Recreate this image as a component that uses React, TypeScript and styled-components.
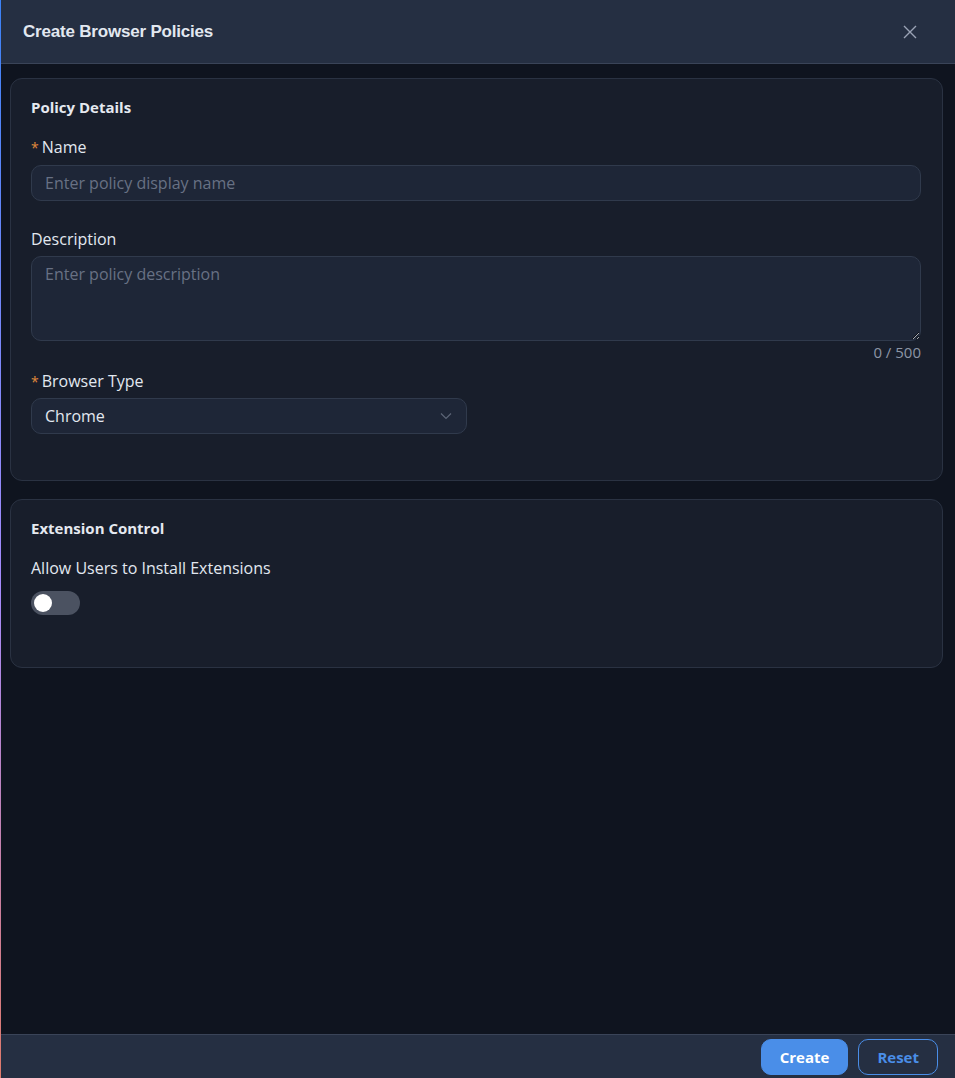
import React, { useState } from "react";
import styled, { createGlobalStyle } from "styled-components";

const FONT = `"Open Sans", "Inter", sans-serif`;

const GlobalStyle = createGlobalStyle`
	html, body {
		margin: 0;
		padding: 0;
		background: #0f141f;
	}
	* {
		box-sizing: border-box;
	}
	body {
		font-family: ${FONT};
		color: #e2e8f0;
	}
`;

const Drawer = styled.div`
	display: flex;
	flex-direction: column;
	width: 955px;
	height: 1078px;
	background: #0f141f;
	border-left: 1px solid;
	border-image: linear-gradient(to bottom, #3b82f6, #a78bfa 55%, #e07a6a) 1;
`;

const Header = styled.div`
	display: flex;
	align-items: center;
	justify-content: space-between;
	height: 64px;
	padding: 0 38px 0 22px;
	background: #252f42;
	border-bottom: 1px solid #3a4458;
	flex-shrink: 0;
`;

const Title = styled.h1`
	margin: 0;
	font-family: "Liberation Sans", Arial, sans-serif;
	font-size: 17px;
	font-weight: 700;
	color: #e2e8f0;
	letter-spacing: -0.2px;
`;

const CloseButton = styled.button`
	display: flex;
	padding: 0;
	border: none;
	background: none;
	cursor: pointer;
`;

const Body = styled.div`
	flex: 1;
	display: flex;
	flex-direction: column;
	gap: 18px;
	padding: 14px 12px 0 9px;
	overflow: auto;
`;

const Card = styled.section<{ minHeight: number }>`
	min-height: ${({ minHeight }) => minHeight}px;
	padding: 18px 21px 24px 20px;
	background: #181e2b;
	border: 1px solid #2a3242;
	border-radius: 12px;
`;

const CardTitle = styled.h2`
	margin: 0 0 19px;
	font-size: 15px;
	font-weight: 700;
	color: #e5e9f0;
`;

const Field = styled.div<{ gapBelow?: number }>`
	display: flex;
	flex-direction: column;
	margin-bottom: ${({ gapBelow }) => gapBelow ?? 0}px;
`;

const Label = styled.label<{ spaceBelow?: number }>`
	display: flex;
	align-items: baseline;
	gap: 3px;
	margin-bottom: ${({ spaceBelow }) => spaceBelow ?? 6}px;
	font-size: 16px;
	line-height: 22px;
	color: #e2e8f0;
`;

const Required = styled.span`
	color: #e08a3c;
	font-size: 14px;
`;

const inputBase = `
	width: 100%;
	padding: 0 13px;
	background: #1e2637;
	border: 1px solid #303a4c;
	border-radius: 10px;
	color: #e2e8f0;
	font-family: ${FONT};
	font-size: 16px;
	outline: none;
	&::placeholder {
		color: #687184;
	}
`;

const TextInput = styled.input`
	${inputBase}
	height: 36px;
`;

const TextArea = styled.textarea`
	${inputBase}
	display: block;
	height: 85px;
	padding-top: 6px;
	resize: vertical;
`;

const Counter = styled.div`
	margin-top: 1px;
	text-align: right;
	font-size: 15px;
	color: #8d95a5;
`;

const SelectBox = styled.div`
	${inputBase}
	display: flex;
	align-items: center;
	justify-content: space-between;
	width: 436px;
	height: 36px;
	padding-right: 14px;
`;

const Toggle = styled.button<{ on: boolean }>`
	position: relative;
	width: 49px;
	height: 24px;
	padding: 0;
	border: none;
	border-radius: 12px;
	background: ${({ on }) => (on ? "#4a8ee8" : "#4b5261")};
	cursor: pointer;

	&::after {
		content: "";
		position: absolute;
		top: 3px;
		left: ${({ on }) => (on ? "28px" : "3px")};
		width: 18px;
		height: 18px;
		border-radius: 50%;
		background: #ffffff;
	}
`;

const Footer = styled.div`
	display: flex;
	justify-content: flex-end;
	align-items: center;
	gap: 10px;
	height: 44px;
	padding: 0 17px 0 0;
	background: #252f42;
	border-top: 1px solid #3a4458;
	flex-shrink: 0;
`;

const Button = styled.button<{ primary?: boolean }>`
	height: 36px;
	padding: 0 18px;
	border-radius: 10px;
	border: 1px solid #4a8ee8;
	background: ${({ primary }) => (primary ? "#4a8ee8" : "transparent")};
	color: ${({ primary }) => (primary ? "#ffffff" : "#4a8ee8")};
	font-family: ${FONT};
	font-size: 15px;
	font-weight: 700;
	cursor: pointer;
`;

const ChevronDown = () => (
	<svg width="12" height="12" viewBox="0 0 12 12" fill="none">
		<path d="M1 3.5 L6 8.5 L11 3.5" stroke="#5c6577" strokeWidth="1.2" />
	</svg>
);

const CloseIcon = () => (
	<svg width="14" height="14" viewBox="0 0 14 14" fill="none">
		<path d="M1 1 L13 13 M13 1 L1 13" stroke="#9aa3b5" strokeWidth="1.4" />
	</svg>
);

export default function App() {
	const [allowExt, setAllowExt] = useState(false);
	const [desc, setDesc] = useState("");

	return (
		<>
			<GlobalStyle />
			<Drawer>
				<Header>
					<Title>Create Browser Policies</Title>
					<CloseButton aria-label="Close">
						<CloseIcon />
					</CloseButton>
				</Header>
				<Body>
					<Card minHeight={403}>
						<CardTitle>Policy Details</CardTitle>
						<Field gapBelow={27}>
							<Label>
								<Required>*</Required>Name
							</Label>
							<TextInput placeholder="Enter policy display name" />
						</Field>
						<Field gapBelow={8}>
							<Label>Description</Label>
							<TextArea
								placeholder="Enter policy description"
								value={desc}
								maxLength={500}
								onChange={(e) => setDesc(e.target.value)}
							/>
							<Counter>{desc.length} / 500</Counter>
						</Field>
						<Field>
							<Label spaceBelow={5}>
								<Required>*</Required>Browser Type
							</Label>
							<SelectBox>
								<span>Chrome</span>
								<ChevronDown />
							</SelectBox>
						</Field>
					</Card>
					<Card minHeight={169}>
						<CardTitle>Extension Control</CardTitle>
						<Field>
							<Label spaceBelow={12}>Allow Users to Install Extensions</Label>
							<div>
								<Toggle on={allowExt} onClick={() => setAllowExt(!allowExt)} />
							</div>
						</Field>
					</Card>
				</Body>
				<Footer>
					<Button primary>Create</Button>
					<Button>Reset</Button>
				</Footer>
			</Drawer>
		</>
	);
}
